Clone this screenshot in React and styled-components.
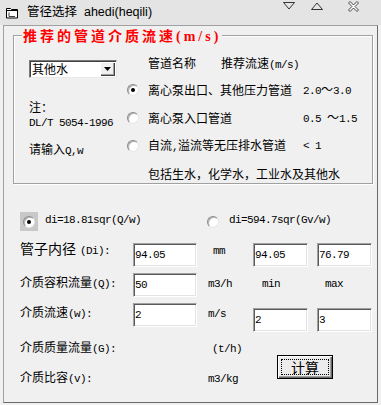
import React from "react";
import styled, { createGlobalStyle } from "styled-components";

const GlobalStyle = createGlobalStyle`
  html, body {
    margin: 0;
    padding: 0;
    background: #f0f0f0;
  }
  body {
    font-family: "Noto Sans CJK SC", sans-serif;
    font-size: 12px;
    color: #000;
  }
`;

const Window = styled.div`
  width: 381px;
  height: 405px;
  display: flex;
  flex-direction: column;
  background: #f0f0f0;
  overflow: hidden;
`;

const TitleBar = styled.div`
  height: 25px;
  flex-shrink: 0;
  display: flex;
  align-items: flex-start;
  background: #e4e4e4;
`;

const AppIcon = styled.svg`
  margin: 6px 0 0 5px;
`;

const TitleText = styled.div`
  margin-left: 8px;
  line-height: 24px;
  font-family: "Liberation Sans", "Noto Sans CJK SC", sans-serif;
  font-size: 12.5px;
  color: #000;
  white-space: pre;
`;

const Controls = styled.div`
  margin-left: auto;
  margin-right: 22px;
  margin-top: 2px;
  display: flex;
  align-items: flex-start;
  gap: 16px;
  svg:last-child {
    margin-left: 9px;
    margin-top: -1px;
  }
`;

const Frame = styled.div`
  flex: 1;
  margin: 0 3px 2px 3px;
  border: 1px solid #a0a0a0;
  border-right-color: #6a6a6a;
  border-bottom-color: #6a6a6a;
  display: flex;
  flex-direction: column;
`;

const Group = styled.div`
  position: relative;
  margin: 9px 4px 0 9px;
  height: 149px;
  box-sizing: border-box;
  border: 1px solid #a0a0a0;
  box-shadow: inset 1px 1px 0 #fff, 1px 1px 0 #fff;
  padding: 15px 0 0 15px;
  display: flex;
`;

const GroupTitle = styled.div`
  position: absolute;
  top: -10px;
  left: 8px;
  padding: 0 1px;
  background: #f0f0f0;
  color: #ff0000;
  font-weight: bold;
  font-size: 14px;
  line-height: 18px;
  letter-spacing: 3px;
  white-space: nowrap;
`;

const SerifBold = styled.span`
  font-family: "Liberation Serif", serif;
  font-weight: bold;
  font-size: 14px;
`;

const Mono = styled.span`
  font-family: "Liberation Mono", monospace;
  font-size: 11px;
  letter-spacing: -0.6px;
`;

const LeftCol = styled.div`
  width: 96px;
  display: flex;
  flex-direction: column;
  line-height: 14px;
`;

const Combo = styled.div`
  margin-top: 9px;
  width: 88px;
  height: 18px;
  box-sizing: border-box;
  display: flex;
  align-items: center;
  background: #fff;
  border: 1px solid;
  border-color: #7a7a7a #e8e8e8 #e8e8e8 #7a7a7a;
  box-shadow: inset 1px 1px 0 #404040;
  padding: 1px 1px 1px 2px;
`;

const ComboButton = styled.span`
  margin-left: auto;
  width: 15px;
  height: 14px;
  box-sizing: border-box;
  display: flex;
  align-items: center;
  justify-content: center;
  background: #f0f0f0;
  box-shadow: inset 1px 1px 0 #fff, inset -1px -1px 0 #404040, inset -2px -2px 0 #a0a0a0;
`;

const Note = styled.div`
  margin-top: ${(p) => p.$top || 0}px;
  white-space: nowrap;
`;

const Options = styled.div`
  display: grid;
  grid-template-columns: 23px 155px auto;
  grid-template-rows: 25px repeat(4, 28px);
  align-items: center;
  line-height: 14px;
  white-space: nowrap;
`;

const Header = styled.div`
  grid-column: 2 / 4;
  display: flex;
  gap: 25px;
`;

const Wide = styled.div`
  grid-column: 2 / 4;
`;

const Radio = styled.span`
  position: relative;
  display: inline-block;
  flex-shrink: 0;
  width: 12px;
  height: 12px;
  box-sizing: border-box;
  border-radius: 50%;
  border: 1px solid;
  border-color: #8a8a8a #e6e6e6 #e6e6e6 #8a8a8a;
  background: #fff;
  box-shadow: inset 1px 1px 0 #b0b0b0;
  margin-left: ${(p) => p.$indent || 0}px;
  &::after {
    content: "";
    display: ${(p) => (p.$checked ? "block" : "none")};
    position: absolute;
    left: 3px;
    top: 3px;
    width: 4px;
    height: 4px;
    border-radius: 50%;
    background: #000;
  }
`;

const FormulaRow = styled.div`
  margin-top: 28px;
  padding-left: 16px;
  height: 19px;
  display: grid;
  grid-template-columns: 187px auto;
  align-items: center;
`;

const Option = styled.div`
  display: flex;
  align-items: center;
  gap: ${(p) => p.$gap}px;
`;

const FocusBox = styled.span`
  width: 18px;
  height: 19px;
  display: flex;
  align-items: center;
  justify-content: center;
  background: #c8c8c8;
`;

const Formula = styled(Mono)`
  margin-top: -4px;
`;

const Form = styled.div`
  margin-top: 12px;
  padding-left: 16px;
  display: grid;
  grid-template-columns: 113px 64px 11px 45px 55px 9px 55px;
  grid-template-rows: 24px 24px 24px 26px 24px;
  row-gap: 6px;
  align-items: start;
  line-height: 14px;
  white-space: nowrap;
`;

const Cell = styled.div`
  grid-column: ${(p) => p.$col};
  grid-row: ${(p) => p.$row};
  margin-top: ${(p) => p.$top || 0}px;
  padding-left: ${(p) => p.$indent || 0}px;
`;

const LabelCell = styled(Cell)`
  font-size: ${(p) => (p.$big ? 14 : 12)}px;
  line-height: ${(p) => (p.$big ? 16 : 14)}px;
  ${Mono} {
    margin-left: ${(p) => (p.$big ? 4 : 0)}px;
  }
`;

const Field = styled.div`
  grid-column: ${(p) => p.$col};
  grid-row: ${(p) => p.$row};
  margin-top: ${(p) => p.$top || 0}px;
  height: 24px;
  box-sizing: border-box;
  background: #fff;
  border: 1px solid;
  border-color: #a0a0a0 #fff #fff #a0a0a0;
  box-shadow: inset 1px 1px 0 #5a5a5a, inset -1px -1px 0 #e3e3e3;
  padding: 2px 0 0 1px;
  line-height: 14px;
`;

const CalcButton = styled.button`
  grid-column: 5 / 8;
  grid-row: 4 / 6;
  justify-self: start;
  margin: 22px 0 0 24px;
  width: 56px;
  height: 24px;
  padding: 3px;
  box-sizing: border-box;
  border: 1px solid #000;
  background: #ececec;
  box-shadow: inset 1px 1px 0 #fff, inset -1px -1px 0 #696969, inset -2px -2px 0 #a0a0a0;
  font-family: "Noto Sans CJK SC", sans-serif;
  font-size: 14px;
  color: #000;
`;

const FocusRect = styled.span`
  display: flex;
  align-items: center;
  justify-content: center;
  height: 100%;
  box-sizing: border-box;
  border: 1px dotted #000;
  line-height: 14px;
`;

const Label = ({ zh, en, row, top, big }) => (
  <LabelCell $col={1} $row={row} $top={top} $big={big}>
    {zh}
    <Mono>({en}):</Mono>
  </LabelCell>
);

export default function App() {
  return (
    <>
      <GlobalStyle />
      <Window>
        <TitleBar>
          <AppIcon width="14" height="13" viewBox="0 0 14 13">
            <path d="M1.5 2.5h4l1 1h6v8.5h-11z" fill="#fff" stroke="#000" />
            <path d="M1.5 4.5h11" stroke="#000" />
            <path d="M4 6.5v4h6" fill="none" stroke="#404040" />
          </AppIcon>
          <TitleText>管径选择  ahedi(heqili)</TitleText>
          <Controls>
            <svg width="12" height="8" viewBox="0 0 12 8">
              <path d="M0.5 0.5h11l-5.5 6.5z" fill="none" stroke="#333" />
            </svg>
            <svg width="12" height="8" viewBox="0 0 12 8">
              <path d="M0.5 7.5h11l-5.5-6.5z" fill="none" stroke="#333" />
            </svg>
            <svg width="11" height="11" viewBox="0 0 11 11">
              <path
                d="M0.5 2l1.5-1.5 3.5 3.5 3.5-3.5 1.5 1.5-3.5 3.5 3.5 3.5-1.5 1.5-3.5-3.5-3.5 3.5-1.5-1.5 3.5-3.5z"
                fill="#fff"
                stroke="#444"
              />
            </svg>
          </Controls>
        </TitleBar>

        <Frame>
          <Group>
            <GroupTitle>
              推荐的管道介质流速<SerifBold>(m/s)</SerifBold>
            </GroupTitle>
            <LeftCol>
              <Combo>
                其他水
                <ComboButton>
                  <svg width="7" height="4" viewBox="0 0 7 4">
                    <path d="M0 0h7l-3.5 4z" fill="#000" />
                  </svg>
                </ComboButton>
              </Combo>
              <Note $top={22}>注：</Note>
              <Note>
                <Mono>DL/T 5054-1996</Mono>
              </Note>
              <Note $top={12}>
                请输入<Mono>Q,w</Mono>
              </Note>
            </LeftCol>
            <Options>
              <Header>
                <span>管道名称</span>
                <span>
                  推荐流速<Mono>(m/s)</Mono>
                </span>
              </Header>
              <Radio $checked $indent={2} />
              <span>离心泵出口、其他压力管道</span>
              <span>
                <Mono>2.0</Mono>～<Mono>3.0</Mono>
              </span>
              <Radio $indent={2} />
              <span>离心泵入口管道</span>
              <span>
                <Mono>0.5 </Mono>～<Mono>1.5</Mono>
              </span>
              <Radio $indent={2} />
              <span>
                自流<Mono>,</Mono>溢流等无压排水管道
              </span>
              <Mono>&lt; 1</Mono>
              <Wide>包括生水，化学水，工业水及其他水</Wide>
            </Options>
          </Group>

          <FormulaRow>
            <Option $gap={7}>
              <FocusBox>
                <Radio $checked />
              </FocusBox>
              <Formula>di=18.81sqr(Q/w)</Formula>
            </Option>
            <Option $gap={10}>
              <Radio />
              <Formula>di=594.7sqr(Gv/w)</Formula>
            </Option>
          </FormulaRow>

          <Form>
            <Label zh="管子内径" en="Di" row={1} top={-3} big />
            <Field $col={2} $row={1}>
              <Mono>94.05</Mono>
            </Field>
            <Cell $col={4} $row={1} $top={-1} $indent={5}>
              <Mono>mm</Mono>
            </Cell>
            <Field $col={5} $row={1}>
              <Mono>94.05</Mono>
            </Field>
            <Field $col={7} $row={1}>
              <Mono>76.79</Mono>
            </Field>

            <Label zh="介质容积流量" en="Q" row={2} top={2} />
            <Field $col={2} $row={2}>
              <Mono>50</Mono>
            </Field>
            <Cell $col={4} $row={2} $top={2}>
              <Mono>m3/h</Mono>
            </Cell>
            <Cell $col={5} $row={2} $top={2} $indent={9}>
              <Mono>min</Mono>
            </Cell>
            <Cell $col={7} $row={2} $top={2} $indent={8}>
              <Mono>max</Mono>
            </Cell>

            <Label zh="介质流速" en="w" row={3} top={2} />
            <Field $col={2} $row={3}>
              <Mono>2</Mono>
            </Field>
            <Cell $col={4} $row={3} $top={2}>
              <Mono>m/s</Mono>
            </Cell>
            <Field $col={5} $row={3} $top={5}>
              <Mono>2</Mono>
            </Field>
            <Field $col={7} $row={3} $top={5}>
              <Mono>3</Mono>
            </Field>

            <Label zh="介质质量流量" en="G" row={4} top={7} />
            <Cell $col={4} $row={4} $top={7} $indent={4}>
              <Mono>(t/h)</Mono>
            </Cell>

            <Label zh="介质比容" en="v" row={5} top={5} />
            <Cell $col={4} $row={5} $top={5}>
              <Mono>m3/kg</Mono>
            </Cell>

            <CalcButton>
              <FocusRect>计算</FocusRect>
            </CalcButton>
          </Form>
        </Frame>
      </Window>
    </>
  );
}
